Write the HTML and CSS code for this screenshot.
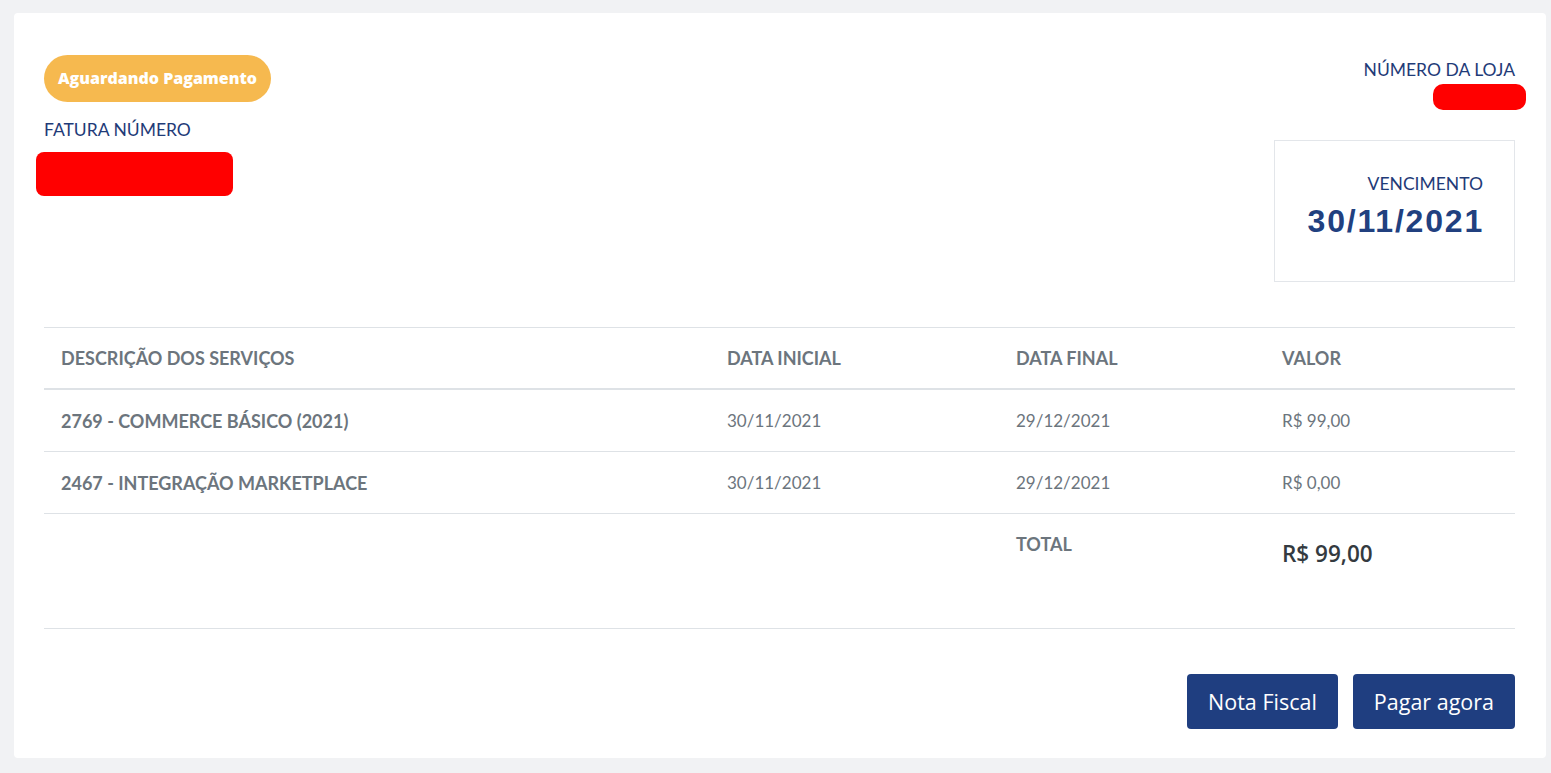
FILE: index.html
```html
<!DOCTYPE html>
<html lang="pt-BR">
<head>
    <meta charset="UTF-8">
    <title>Fatura</title>
    <link rel="stylesheet" href="styles.css">
</head>
<body>

<div class="invoice_card">

    <!-- ===== TOPO ===== -->
    <div class="invoice_top">
        <div class="invoice_left">
            <span class="status_badge">Aguardando Pagamento</span>
            <p class="top_label">FATURA NÚMERO</p>
            <div class="hidden_block invoice_number"></div>
        </div>

        <div class="invoice_right">
            <p class="top_label">NÚMERO DA LOJA</p>
            <div class="hidden_block store_number"></div>

            <div class="due_box">
                <p class="top_label">VENCIMENTO</p>
                <p class="due_date">30/11/2021</p>
            </div>
        </div>
    </div>

    <!-- ===== SERVIÇOS ===== -->
    <table class="services_table">
        <thead>
            <tr>
                <th class="col_desc">DESCRIÇÃO DOS SERVIÇOS</th>
                <th class="col_start">DATA INICIAL</th>
                <th class="col_end">DATA FINAL</th>
                <th class="col_value">VALOR</th>
            </tr>
        </thead>
        <tbody>
            <tr>
                <td class="service_name">2769 - COMMERCE BÁSICO (2021)</td>
                <td>30/11/2021</td>
                <td>29/12/2021</td>
                <td>R$ 99,00</td>
            </tr>
            <tr>
                <td class="service_name">2467 - INTEGRAÇÃO MARKETPLACE</td>
                <td>30/11/2021</td>
                <td>29/12/2021</td>
                <td>R$ 0,00</td>
            </tr>
            <tr class="total_row">
                <td></td>
                <td></td>
                <td class="total_label">TOTAL</td>
                <td class="total_value">R$ 99,00</td>
            </tr>
        </tbody>
    </table>

    <div class="invoice_actions">
        <button class="action_button">Nota Fiscal</button>
        <button class="action_button">Pagar agora</button>
    </div>
</div>

</body>
</html>
```

FILE: styles.css
```css
body {
    margin: 0;
    padding: 13px 5px 15px 14px;
    background-color: #f1f2f4;
    font-family: 'Lato', 'Open Sans', sans-serif;
}

p {
    margin: 0;
}

/* ===== Card ===== */
.invoice_card {
    background-color: #fff;
    border-radius: 4px;
    padding: 42px 31px 29px 30px;
}

.invoice_top {
    display: flex;
    justify-content: space-between;
    align-items: flex-start;
    height: 272px;
}

.invoice_left {
    display: flex;
    flex-direction: column;
    align-items: flex-start;
}

.status_badge {
    display: inline-block;
    background-color: #f6b94f;
    color: #fff;
    font-family: 'Open Sans', sans-serif;
    font-weight: 800;
    font-size: 16px;
    line-height: 47px;
    height: 47px;
    padding: 0 14px;
    border-radius: 24px;
}

.top_label {
    color: #1f3b78;
    font-size: 17.5px;
    font-weight: 400;
    line-height: 20px;
}

.invoice_left .top_label {
    margin-top: 18px;
}

.hidden_block {
    background-color: #ff0000;
}

.invoice_number {
    width: 197px;
    height: 44px;
    border-radius: 8px;
    margin: 12px 0 0 -8px;
}

.invoice_right {
    display: flex;
    flex-direction: column;
    align-items: flex-end;
    padding-top: 5px;
}

.store_number {
    width: 93px;
    height: 26px;
    border-radius: 10px;
    margin: 4px -11px 0 0;
}

.due_box {
    width: 241px;
    height: 142px;
    border: 1px solid #e3e6ea;
    margin-top: 30px;
    padding: 33px 31px 0 0;
    box-sizing: border-box;
    text-align: right;
}

.due_date {
    font-family: 'Liberation Sans', Arial, sans-serif;
    font-weight: 700;
    font-size: 32px;
    letter-spacing: 1.8px;
    color: #21407f;
    margin-top: 9px;
    margin-right: -1px;
}

/* ===== Tabela ===== */
.services_table {
    width: 100%;
    border-collapse: collapse;
    font-size: 17px;
    color: #6c757d;
}

.services_table th,
.services_table td {
    text-align: left;
    padding: 0 17px;
    border-top: 1px solid #dee2e6;
}

.services_table th {
    height: 60px;
    font-size: 18px;
    font-weight: 700;
    border-bottom: 2px solid #dee2e6;
}

.services_table td {
    height: 61px;
}

.service_name {
    font-size: 18px;
    font-weight: 700;
}

.col_desc { width: 632px; }
.col_start { width: 255px; }
.col_end { width: 232px; }

.total_row {
    height: 115px;
}

.services_table .total_row td {
    height: auto;
    vertical-align: top;
    border-bottom: 1px solid #dee2e6;
}

.services_table .total_label {
    font-size: 18px;
    font-weight: 700;
    padding-top: 19px;
}

.services_table .total_value {
    font-family: 'Open Sans', sans-serif;
    font-weight: 600;
    font-size: 22.5px;
    color: #343a40;
    padding-top: 24px;
}

/* ===== Botões ===== */
.invoice_actions {
    display: flex;
    justify-content: flex-end;
    gap: 15px;
    margin-top: 45px;
}

.action_button {
    background-color: #1f3e80;
    color: #fff;
    border: none;
    border-radius: 4px;
    height: 55px;
    padding: 0 21px;
    font-family: 'Open Sans', sans-serif;
    font-size: 21.5px;
    cursor: pointer;
}
```
